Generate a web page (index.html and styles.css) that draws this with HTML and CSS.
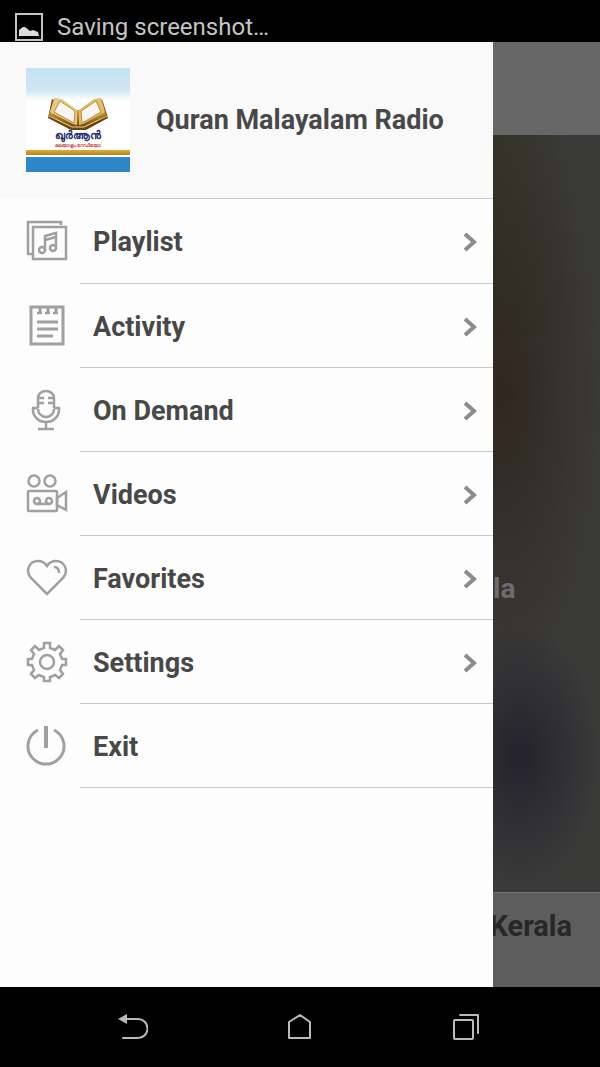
FILE: index.html
```
<!DOCTYPE html>
<html lang="en">
<head>
    <meta charset="UTF-8">
    <meta name="viewport" content="width=device-width, initial-scale=1.0">
    <title>Quran Malayalam Radio</title>
    <link rel="stylesheet" href="styles.css">
</head>
<body>
    <header class="status-bar">
        <svg class="status-icon" viewBox="0 0 28 28" aria-hidden="true">
            <rect x="1" y="1" width="26" height="26" fill="none" stroke="#c4c4c4" stroke-width="2"/>
            <path d="M4 23v-6l4-3h2l5 4 3-1 5 2 1 4z" fill="#dcdcdc"/>
        </svg>
        <span>Saving screenshot…</span>
    </header>

    <main class="screen">
        <aside class="drawer">
            <div class="drawer-header">
                <svg class="logo" viewBox="0 0 104 104" role="img" aria-label="Logo">
                    <defs>
                        <linearGradient id="sky" x1="0" y1="0" x2="0" y2="1">
                            <stop offset="0" stop-color="#c6e1f3"/>
                            <stop offset="0.7" stop-color="#cfe6f5"/>
                            <stop offset="1" stop-color="#ffffff"/>
                        </linearGradient>
                        <linearGradient id="gold" x1="0" y1="0" x2="0" y2="1">
                            <stop offset="0" stop-color="#e3c06c"/>
                            <stop offset="0.5" stop-color="#c8952c"/>
                            <stop offset="1" stop-color="#6a3f0c"/>
                        </linearGradient>
                        <linearGradient id="band" x1="0" y1="0" x2="0" y2="1">
                            <stop offset="0" stop-color="#e3ac35"/>
                            <stop offset="1" stop-color="#b9811c"/>
                        </linearGradient>
                    </defs>
                    <rect width="104" height="104" fill="#ffffff"/>
                    <rect width="104" height="32" fill="url(#sky)"/>
                    <rect y="82" width="104" height="5" fill="url(#band)"/>
                    <rect y="89" width="104" height="15" fill="#2c86c8"/>
                    <path d="M26 31 L22 50 L45 62 H60 L82 50 L76 31 L71 33 L54 42 H50 L31 33z" fill="#6d430f"/>
                    <path d="M28 30 L23 47 L46 60 H58 L80 47 L75 30 L70 32 L53 42 H50 L33 31z" fill="url(#gold)"/>
                    <path d="M29 30 L36 31 L51 42 V57 L47 56 L24 44z" fill="#e5ca84"/>
                    <path d="M75 30 L68 31 L53 42 V57 L57 56 L79 44z" fill="#dfbd6b"/>
                    <path d="M34 33 L49 43 L48 55 L28 44z" fill="#f8f5f5" stroke="#bc8c34"/>
                    <path d="M70 33 L55 43 L56 55 L75 44z" fill="#f8f5f5" stroke="#bc8c34"/>
                    <path d="M23 48 L46 59 H58 L81 48" fill="none" stroke="#f0d891"/>
                    <text class="logo-name" x="52" y="71" text-anchor="middle">ഖുർആൻ</text>
                    <text class="logo-sub" x="52" y="79" text-anchor="middle">മലയാളം റേഡിയോ</text>
                </svg>
                <h1 class="drawer-title">Quran Malayalam Radio</h1>
            </div>

            <nav class="menu">
                <a class="menu-item" href="#playlist">
                    <svg class="menu-icon" viewBox="0 0 42 42" aria-hidden="true">
                        <path d="M35 5V2H2v32h5"/>
                        <rect x="7" y="7" width="33" height="32"/>
                        <path d="M19 30V16l11-3v14M19 20l11-3"/>
                        <circle cx="16" cy="30" r="3"/>
                        <circle cx="27" cy="28" r="3"/>
                    </svg>
                    <span class="menu-label">Playlist
                        <svg class="chevron" viewBox="0 0 14 22" aria-hidden="true"><path d="M2 3l9 8-9 8"/></svg>
                    </span>
                </a>
                <a class="menu-item" href="#activity">
                    <svg class="menu-icon" viewBox="0 0 42 42" aria-hidden="true">
                        <path d="M5 2h32v37H5zM11 17h21M11 24h21M11 31h16" stroke-width="3"/>
                        <path d="M14 3v6M22 3v6M30 3v6" stroke-width="3"/>
                        <path d="M11 8h5M19 8h5M27 8h5"/>
                    </svg>
                    <span class="menu-label">Activity
                        <svg class="chevron" viewBox="0 0 14 22" aria-hidden="true"><path d="M2 3l9 8-9 8"/></svg>
                    </span>
                </a>
                <a class="menu-item" href="#on-demand">
                    <svg class="menu-icon" viewBox="0 0 42 42" aria-hidden="true">
                        <path d="M12 19V9a8 7 0 0 1 16 0v10M12 20a8 8 0 0 0 16 0"/>
                        <path d="M6 19h6M28 19h6M7 19v2a13 12 0 0 0 26 0v-2M20 33v7M12 40h16"/>
                        <path d="M12 9h6M22 9h6M12 14h6M22 14h6"/>
                    </svg>
                    <span class="menu-label">On Demand
                        <svg class="chevron" viewBox="0 0 14 22" aria-hidden="true"><path d="M2 3l9 8-9 8"/></svg>
                    </span>
                </a>
                <a class="menu-item" href="#videos">
                    <svg class="menu-icon" viewBox="0 0 42 42" aria-hidden="true">
                        <circle cx="8" cy="8" r="5.500"/>
                        <circle cx="24" cy="8" r="5.500"/>
                        <rect x="2" y="18" width="29" height="20" rx="1"/>
                        <path d="M31 25l9-6v18l-9-5z"/>
                        <circle cx="11" cy="28" r="3"/>
                        <circle cx="23" cy="28" r="3"/>
                        <path d="M11 31h12"/>
                    </svg>
                    <span class="menu-label">Videos
                        <svg class="chevron" viewBox="0 0 14 22" aria-hidden="true"><path d="M2 3l9 8-9 8"/></svg>
                    </span>
                </a>
                <a class="menu-item" href="#favorites">
                    <svg class="menu-icon" viewBox="0 0 42 42" aria-hidden="true">
                        <path d="M21 37L5 21C-1 14 3 4 12 4c4 0 7 2 9 5 2-3 5-5 9-5 9 0 13 10 7 17z"/>
                        <path d="M28 10c3 0 5 2 5 6"/>
                    </svg>
                    <span class="menu-label">Favorites
                        <svg class="chevron" viewBox="0 0 14 22" aria-hidden="true"><path d="M2 3l9 8-9 8"/></svg>
                    </span>
                </a>
                <a class="menu-item" href="#settings">
                    <svg class="menu-icon" viewBox="0 0 42 42" aria-hidden="true">
                        <path d="M18 2h6v5l5 2 4-4 4 4-3 4 2 5h4v6h-4l-2 5 3 4-4 4-4-3-5 2v4h-6v-4l-5-2-4 3-4-4 3-4-2-5H2v-6h4l2-5-3-4 4-4 4 4 5-2z"/>
                        <circle cx="21" cy="21" r="7"/>
                    </svg>
                    <span class="menu-label">Settings
                        <svg class="chevron" viewBox="0 0 14 22" aria-hidden="true"><path d="M2 3l9 8-9 8"/></svg>
                    </span>
                </a>
                <a class="menu-item" href="#exit">
                    <svg class="menu-icon" viewBox="0 0 42 42" aria-hidden="true">
                        <path d="M12 5a18 18 0 1 0 16 0" stroke-width="3"/>
                        <path d="M20 1v22" stroke-width="4"/>
                    </svg>
                    <span class="menu-label">Exit</span>
                </a>
            </nav>
        </aside>

        <!-- dimmed page behind the open drawer -->
        <section class="page">
            <div class="page-top"></div>
            <div class="page-photo"><span class="photo-caption">la</span></div>
            <div class="page-bottom"><span>Kerala</span></div>
        </section>
    </main>

    <footer class="nav-bar">
        <button class="nav-button" type="button" aria-label="Back">
            <svg viewBox="0 0 30 30" aria-hidden="true">
                <path d="M8 7h12a9 9 0 0 1 0 19H5"/>
                <path class="solid" d="M0 7l9-5v10z"/>
            </svg>
        </button>
        <button class="nav-button" type="button" aria-label="Home">
            <svg viewBox="0 0 30 30" aria-hidden="true">
                <path d="M4 10l11-7 10 7v16H4z"/>
            </svg>
        </button>
        <button class="nav-button" type="button" aria-label="Recent apps">
            <svg viewBox="0 0 30 30" aria-hidden="true">
                <rect x="2" y="8" width="19" height="19" rx="1"/>
                <path d="M8 3h18v18"/>
            </svg>
        </button>
    </footer>
</body>
</html>
```
FILE: styles.css
```
* {
    margin: 0;
    padding: 0;
    box-sizing: border-box;
}

body {
    min-height: 100vh;
    display: flex;
    flex-direction: column;
    font-family: Roboto, "Noto Sans", sans-serif;
    color: #484848;
    background: #000;
}

/* Status bar */
.status-bar {
    height: 42px;
    padding: 11px 15px 0;
    display: flex;
    align-items: center;
    gap: 14px;
    background: #000;
    color: #c4c4c4;
    font-size: 24px;
    line-height: 30px;
}

.status-icon {
    width: 28px;
    height: 28px;
}

.screen {
    flex: 1;
    display: flex;
}

/* Drawer */
.drawer {
    flex: 1;
    background: #fdfdfd;
}

.drawer-header {
    height: 156px;
    padding: 0 26px;
    display: flex;
    align-items: center;
    gap: 26px;
    background: #f9f9f9;
}

.logo {
    width: 104px;
    height: 104px;
}

.logo-name {
    font-size: 11px;
    font-weight: bold;
    fill: #23306f;
}

.logo-sub {
    font-size: 5px;
    font-weight: bold;
    fill: #c4423c;
}

.drawer-title {
    font-size: 27px;
    font-weight: 700;
}

.menu {
    display: flex;
    flex-direction: column;
}

.menu-item {
    display: flex;
    align-items: center;
    gap: 12px;
    padding-left: 26px;
    color: #484848;
    text-decoration: none;
}

.menu-icon {
    width: 42px;
    height: 42px;
    fill: none;
    stroke: #a0a0a0;
    stroke-width: 2.500;
}

.menu-label {
    flex: 1;
    display: flex;
    align-items: center;
    justify-content: space-between;
    height: 84px;
    padding: 2px 16px 0 13px;
    border-bottom: 1px solid #c8c8c8;
    font-size: 27px;
    font-weight: 700;
}

.menu-item:first-child .menu-label {
    height: 86px;
    border-top: 1px solid #c8c8c8;
}

.chevron {
    width: 14px;
    height: 22px;
    fill: none;
    stroke: #8c8c8c;
    stroke-width: 4;
}

/* Page behind the drawer */
.page {
    width: 107px;
    display: flex;
    flex-direction: column;
    overflow: hidden;
}

.page-top {
    height: 93px;
    background: #676767;
}

.page-photo {
    flex: 1;
    display: flex;
    flex-direction: column;
    justify-content: center;
    background:
        radial-gradient(ellipse 80px 130px at 25% 82%, #24232e 0%, rgba(36, 35, 46, 0) 100%),
        radial-gradient(ellipse 100px 300px at 10% 34%, #30271f 0%, rgba(48, 39, 31, 0) 100%),
        linear-gradient(to right, #35352a 0%, rgba(53, 53, 42, 0) 80%) top / 100% 200px no-repeat,
        #3a3a39;
}

.photo-caption {
    padding-top: 150px;
    font-size: 28px;
    font-weight: 700;
    color: #6c6c6c;
}

.page-bottom {
    height: 95px;
    padding: 17px 28px 0 0;
    display: flex;
    justify-content: flex-end;
    border-top: 1px solid #777;
    background: #5d5d5d;
    color: #272727;
    font-size: 29px;
    font-weight: 700;
    line-height: 32px;
}

/* System buttons */
.nav-bar {
    height: 80px;
    padding: 0 50px;
    display: flex;
    background: #000;
}

.nav-button {
    flex: 1;
    display: flex;
    align-items: center;
    justify-content: center;
    border: 0;
    background: none;
}

.nav-button svg {
    width: 30px;
    height: 30px;
    fill: none;
    stroke: #bababa;
    stroke-width: 2;
    stroke-linejoin: round;
    stroke-linecap: round;
}

.nav-button .solid {
    fill: #bababa;
    stroke: none;
}
```
